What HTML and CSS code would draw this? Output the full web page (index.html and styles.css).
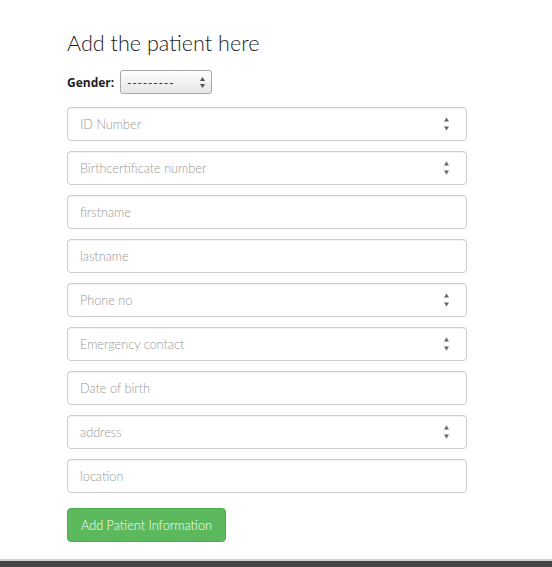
FILE: index.html
```html
<!DOCTYPE html>
<html>
<head>
<meta charset="utf-8">
<link rel="stylesheet" href="styles.css">
</head>
<body>
<div class="page">
  <h1 class="title">Add the patient here</h1>
  <div class="gender-row">
    <span class="gender-label">Gender:</span>
    <div class="select">
      <span class="select-text">---------</span>
      <svg class="arrows" width="7" height="13" viewBox="0 0 7 13"><path d="M3.5 1 L6 5 L1 5 Z M1 8 L6 8 L3.5 12 Z" fill="#555"/></svg>
    </div>
  </div>
  <div class="fields">
    <div class="field"><span class="ph">ID Number</span><svg class="spin" width="7" height="14" viewBox="0 0 7 14"><path d="M3.5 0.5 L6 4.5 L1 4.5 Z M1 9.5 L6 9.5 L3.5 13.5 Z" fill="#666"/></svg></div>
    <div class="field"><span class="ph">Birthcertificate number</span><svg class="spin" width="7" height="14" viewBox="0 0 7 14"><path d="M3.5 0.5 L6 4.5 L1 4.5 Z M1 9.5 L6 9.5 L3.5 13.5 Z" fill="#666"/></svg></div>
    <div class="field"><span class="ph">firstname</span></div>
    <div class="field"><span class="ph">lastname</span></div>
    <div class="field"><span class="ph">Phone no</span><svg class="spin" width="7" height="14" viewBox="0 0 7 14"><path d="M3.5 0.5 L6 4.5 L1 4.5 Z M1 9.5 L6 9.5 L3.5 13.5 Z" fill="#666"/></svg></div>
    <div class="field"><span class="ph">Emergency contact</span><svg class="spin" width="7" height="14" viewBox="0 0 7 14"><path d="M3.5 0.5 L6 4.5 L1 4.5 Z M1 9.5 L6 9.5 L3.5 13.5 Z" fill="#666"/></svg></div>
    <div class="field"><span class="ph">Date of birth</span></div>
    <div class="field"><span class="ph">address</span><svg class="spin" width="7" height="14" viewBox="0 0 7 14"><path d="M3.5 0.5 L6 4.5 L1 4.5 Z M1 9.5 L6 9.5 L3.5 13.5 Z" fill="#666"/></svg></div>
    <div class="field"><span class="ph">location</span></div>
  </div>
  <button class="submit">Add Patient Information</button>
</div>
<div class="footer"></div>
</body>
</html>
```
FILE: styles.css
```css
html, body {
  margin: 0;
  padding: 0;
  background: #fff;
  font-family: Lato, "Liberation Sans", sans-serif;
}
.page {
  padding: 28px 0 0 67px;
  width: 400px;
}
.title {
  margin: 0;
  font-size: 21.6px;
  line-height: 30px;
  font-weight: 300;
  color: #1a1a1a;
}
.gender-row {
  margin-top: 12px;
  display: flex;
  align-items: center;
  height: 24px;
}
.gender-label {
  font-family: "Open Sans", sans-serif;
  font-size: 12px;
  font-weight: 700;
  color: #222;
  margin-right: 6px;
}
.select {
  box-sizing: border-box;
  width: 92px;
  height: 24px;
  border: 1px solid #a8a8a8;
  border-radius: 3px;
  background: linear-gradient(#fdfdfd, #e6e6e6);
  display: flex;
  align-items: center;
  justify-content: space-between;
  padding: 0 5px 0 6px;
}
.select-text {
  font-family: "DejaVu Sans", sans-serif;
  font-size: 11px;
  color: #222;
  letter-spacing: 1.3px;
}
.fields {
  margin-top: 13px;
  display: flex;
  flex-direction: column;
  gap: 10px;
}
.field {
  box-sizing: border-box;
  height: 34px;
  border: 1px solid #ccc;
  border-radius: 4px;
  display: flex;
  align-items: center;
  justify-content: space-between;
  padding: 0 16px 0 12px;
  box-shadow: inset 0 1px 1px rgba(0,0,0,0.05);
}
.ph {
  font-size: 12.7px;
  color: #999;
  font-weight: 300;
}
.submit {
  margin-top: 15px;
  height: 34px;
  width: 159px;
  background: #5cb85c;
  border: 1px solid #4cae4c;
  border-radius: 4px;
  color: #fff;
  font-family: Lato, "Liberation Sans", sans-serif;
  font-size: 12.7px;
  font-weight: 300;
  padding: 0;
  display: block;
}
.footer {
  margin-top: 17px;
  border-top: 2px solid #d0d0d0;
  height: 6px;
  background: #444;
}
```
